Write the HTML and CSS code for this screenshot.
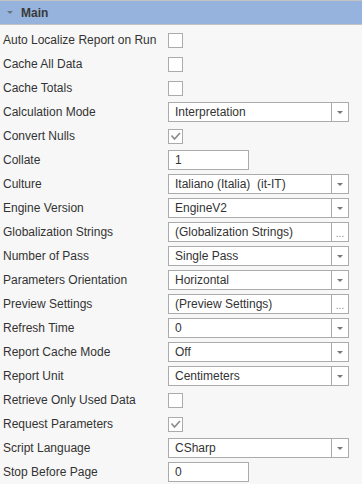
FILE: index.html
```html
<!DOCTYPE html>
<html lang="en">
<head>
    <meta charset="UTF-8">
    <title>Properties - Main</title>
    <link rel="stylesheet" href="styles.css">
</head>
<body>
    <div class="group-header">
        <span class="caret"></span>
        <span class="group-title">Main</span>
    </div>
    <div class="props">
        <div class="row">
            <span class="label">Auto Localize Report on Run</span>
            <span class="check"></span>
        </div>
        <div class="row">
            <span class="label">Cache All Data</span>
            <span class="check"></span>
        </div>
        <div class="row">
            <span class="label">Cache Totals</span>
            <span class="check"></span>
        </div>
        <div class="row">
            <span class="label">Calculation Mode</span>
            <div class="combo"><span class="value">Interpretation</span><span class="btn"><i class="arrow"></i></span></div>
        </div>
        <div class="row">
            <span class="label">Convert Nulls</span>
            <span class="check"><svg width="13" height="13" viewBox="0 0 13 13"><polyline points="2.5,5.5 5.5,9 11,3" fill="none" stroke="#8a8a8a" stroke-width="1.6"/></svg></span>
        </div>
        <div class="row">
            <span class="label">Collate</span>
            <div class="textbox">1</div>
        </div>
        <div class="row">
            <span class="label">Culture</span>
            <div class="combo"><span class="value">Italiano (Italia)&nbsp; (it-IT)</span><span class="btn"><i class="arrow"></i></span></div>
        </div>
        <div class="row">
            <span class="label">Engine Version</span>
            <div class="combo"><span class="value">EngineV2</span><span class="btn"><i class="arrow"></i></span></div>
        </div>
        <div class="row">
            <span class="label">Globalization Strings</span>
            <div class="combo"><span class="value">(Globalization Strings)</span><span class="btn dots">...</span></div>
        </div>
        <div class="row">
            <span class="label">Number of Pass</span>
            <div class="combo"><span class="value">Single Pass</span><span class="btn"><i class="arrow"></i></span></div>
        </div>
        <div class="row">
            <span class="label">Parameters Orientation</span>
            <div class="combo"><span class="value">Horizontal</span><span class="btn"><i class="arrow"></i></span></div>
        </div>
        <div class="row">
            <span class="label">Preview Settings</span>
            <div class="combo"><span class="value">(Preview Settings)</span><span class="btn dots">...</span></div>
        </div>
        <div class="row">
            <span class="label">Refresh Time</span>
            <div class="combo"><span class="value">0</span><span class="btn"><i class="arrow"></i></span></div>
        </div>
        <div class="row">
            <span class="label">Report Cache Mode</span>
            <div class="combo"><span class="value">Off</span><span class="btn"><i class="arrow"></i></span></div>
        </div>
        <div class="row">
            <span class="label">Report Unit</span>
            <div class="combo"><span class="value">Centimeters</span><span class="btn"><i class="arrow"></i></span></div>
        </div>
        <div class="row">
            <span class="label">Retrieve Only Used Data</span>
            <span class="check"></span>
        </div>
        <div class="row">
            <span class="label">Request Parameters</span>
            <span class="check"><svg width="13" height="13" viewBox="0 0 13 13"><polyline points="2.5,5.5 5.5,9 11,3" fill="none" stroke="#8a8a8a" stroke-width="1.6"/></svg></span>
        </div>
        <div class="row">
            <span class="label">Script Language</span>
            <div class="combo"><span class="value">CSharp</span><span class="btn"><i class="arrow"></i></span></div>
        </div>
        <div class="row">
            <span class="label">Stop Before Page</span>
            <div class="textbox">0</div>
        </div>
    </div>
</body>
</html>
```

FILE: styles.css
```css
body {
    font-family: "Liberation Sans", Arial, sans-serif;
    font-size: 12px;
    color: #333;
    margin: 0;
    background: #f7f7f7;
    height: 484px;
    overflow: hidden;
}
.group-header {
    height: 23px;
    background-color: #95b3dc;
    border-top: 1px solid #c3c3c3;
    border-bottom: 1px solid #c3c3c3;
    display: flex;
    align-items: center;
}
.caret {
    width: 0;
    height: 0;
    margin-left: 7px;
    margin-right: 8px;
    border-left: 3px solid transparent;
    border-right: 3px solid transparent;
    border-top: 3px solid #6a7480;
}
.group-title {
    font-weight: bold;
    color: #3a3a3a;
}
.props {
    padding-top: 3px;
}
.row {
    display: grid;
    grid-template-columns: 168px auto;
    align-items: center;
    justify-items: start;
    height: 24px;
}
.label {
    padding-left: 3px;
    white-space: nowrap;
}
.check {
    width: 13px;
    height: 13px;
    border: 1px solid #ababab;
    background: #fff;
    display: flex;
}
.combo {
    width: 181px;
    height: 20px;
    box-sizing: border-box;
    border: 1px solid #ababab;
    background: #fff;
    display: flex;
}
.combo .value {
    flex: 1;
    padding-left: 6px;
    line-height: 18px;
    white-space: nowrap;
    overflow: hidden;
}
.combo .btn {
    width: 16px;
    border-left: 1px solid #ababab;
    display: flex;
    align-items: center;
    justify-content: center;
}
.arrow {
    width: 0;
    height: 0;
    border-left: 3px solid transparent;
    border-right: 3px solid transparent;
    border-top: 3px solid #777;
    margin-top: 1px;
}
.btn.dots {
    color: #888;
    font-size: 10px;
    align-items: flex-end;
    line-height: 14px;
}
.textbox {
    width: 81px;
    height: 20px;
    box-sizing: border-box;
    border: 1px solid #ababab;
    background: #fff;
    padding-left: 6px;
    line-height: 18px;
}
```
